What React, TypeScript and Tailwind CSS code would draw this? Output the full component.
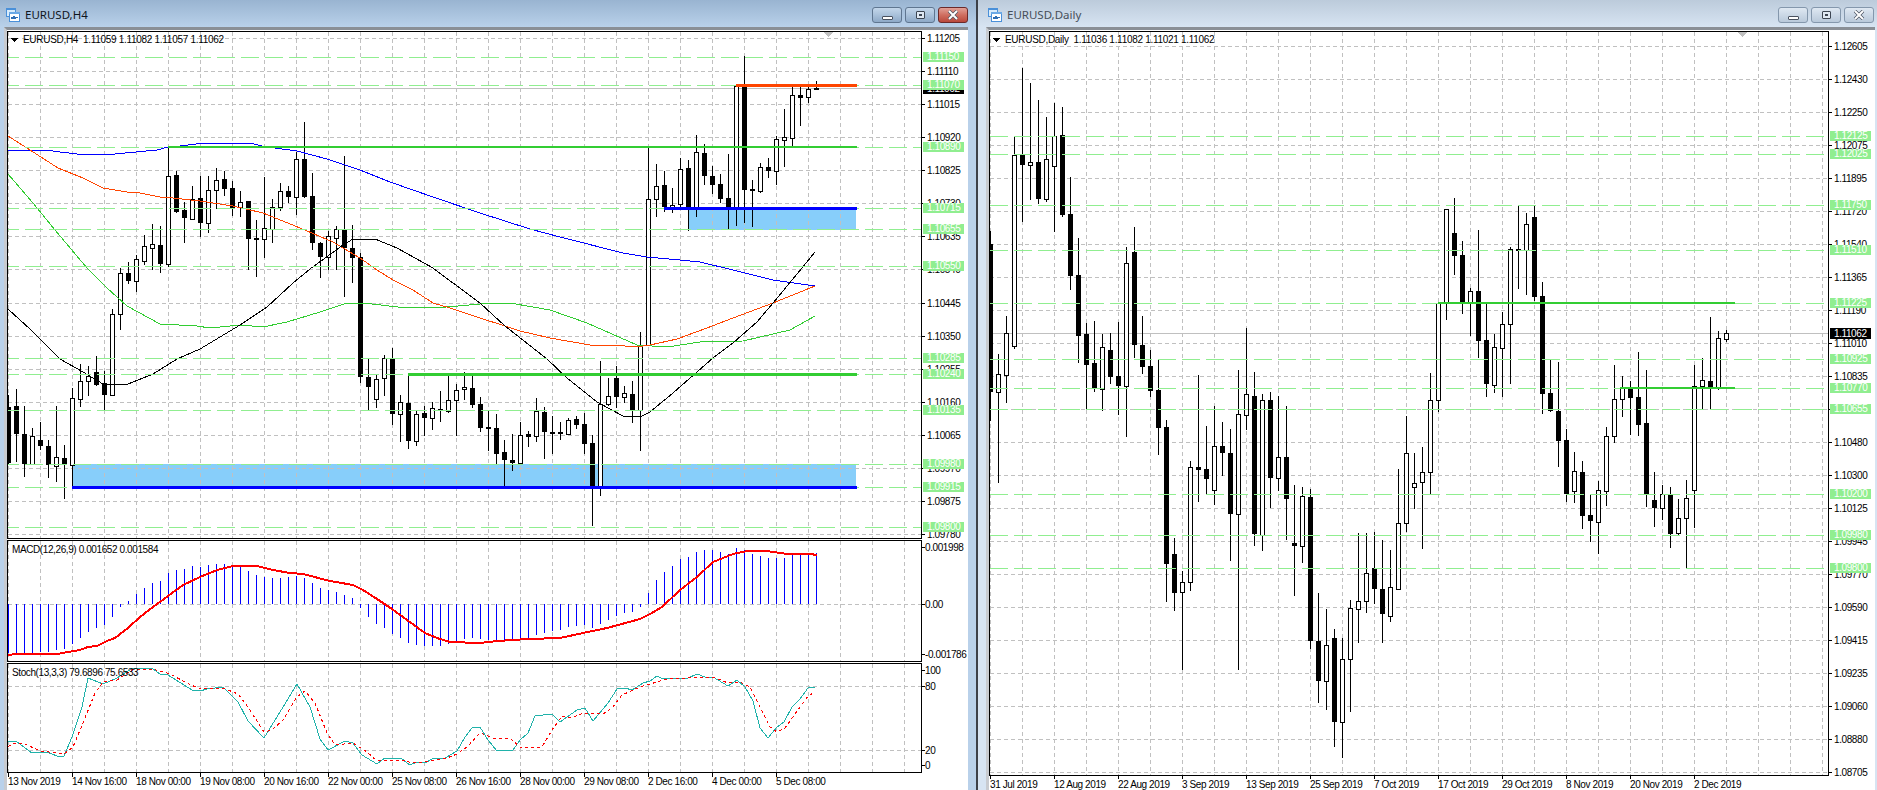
import React from 'react';

type Candle = [number, number, number, number, number];
type Pt = [number, number];

// hi, body top, body bottom, lo, bull
const H4: Candle[] = [
  [395,407,463,465,0],[389,406,434,462,0],[406,434,464,477,0],[428,436,464,464,1],[422,440,446,450,0],[440,446,465,478,0],
  [406,457,466,482,1],[445,458,465,499,0],[388,398,465,487,1],[364,381,399,407,1],[366,376,381,396,1],[356,372,385,386,0],
  [371,383,395,410,0],[309,314,395,396,1],[268,273,314,330,1],[262,273,281,284,0],[255,259,281,292,1],[235,246,261,265,1],
  [224,244,248,270,1],[226,245,264,273,0],[148,176,264,267,1],[171,175,212,213,0],[202,210,218,243,0],[186,199,219,220,1],
  [176,198,223,237,0],[176,190,223,233,1],[168,180,190,209,1],[171,179,189,196,0],[181,188,208,216,0],[191,202,207,217,1],
  [201,201,239,270,0],[220,238,239,277,0],[177,228,239,258,1],[199,207,229,243,1],[183,191,207,211,1],[186,191,197,203,0],
  [152,159,197,215,1],[122,159,197,198,0],[173,196,243,250,0],[242,243,257,278,0],[231,236,257,270,1],[226,229,238,270,1],
  [156,230,248,297,0],[225,248,258,283,0],[253,257,377,383,0],[359,377,387,410,0],[375,379,399,408,1],[355,358,378,396,1],
  [348,358,414,425,0],[395,402,414,442,1],[375,403,441,449,0],[410,414,441,446,1],[406,413,418,436,0],[402,408,418,430,1],
  [391,409,410,422,0],[376,400,411,413,1],[384,390,400,436,1],[372,387,389,400,1],[376,388,405,408,0],[397,404,428,432,0],
  [411,427,429,451,0],[414,428,454,465,0],[440,452,460,487,0],[434,460,463,471,0],[422,435,463,464,1],[431,434,437,447,0],
  [398,411,436,442,1],[407,412,432,459,0],[416,432,433,454,0],[422,432,434,440,0],[418,420,434,435,1],[416,419,425,429,0],
  [413,424,444,454,0],[435,443,487,526,0],[361,404,487,496,1],[378,396,404,406,1],[366,378,397,408,0],[386,393,397,403,1],
  [381,394,410,423,0],[332,346,410,451,1],[148,199,345,346,1],[164,186,199,217,1],[171,185,207,212,0],[188,205,207,213,1],
  [158,169,204,207,1],[160,168,207,231,0],[135,152,208,217,1],[144,153,176,185,0],[166,176,185,194,0],[174,184,199,203,0],
  [154,198,207,229,0],[86,86,208,226,1],[56,86,190,223,0],[180,189,190,227,0],[163,167,191,193,1],[158,167,171,178,0],
  [136,139,171,185,1],[109,137,140,167,1],[86,95,138,146,1],[86,95,98,126,0],[87,89,97,103,1],[81,88,89,90,0],
];

const DAILY: Candle[] = [
  [231,244,392,421,0],[354,374,392,483,1],[316,333,375,403,1],[137,155,346,349,1],[68,155,165,222,0],[83,162,165,200,1],
  [100,162,199,204,0],[117,159,199,202,1],[103,136,166,232,1],[107,135,215,217,0],[177,214,276,290,0],[238,275,336,363,0],
  [323,334,365,409,0],[321,363,388,392,0],[334,347,389,411,1],[333,350,377,384,0],[322,376,386,415,0],[247,263,386,437,1],
  [227,252,345,358,0],[316,345,367,374,0],[350,366,391,397,0],[360,390,428,455,0],[420,427,564,602,0],[538,554,593,611,0],
  [571,582,592,670,1],[461,467,582,591,1],[375,467,470,502,0],[426,469,479,494,0],[406,446,490,505,1],[422,446,453,476,0],
  [429,453,514,561,0],[370,414,514,670,1],[328,394,415,430,1],[372,396,534,546,0],[394,400,535,551,1],[392,400,478,508,0],
  [396,457,478,491,1],[406,457,499,540,0],[485,543,546,596,0],[487,496,546,563,1],[489,497,641,649,0],[593,641,681,703,0],
  [609,645,681,710,1],[629,638,722,747,0],[638,659,722,758,1],[600,608,659,712,1],[533,601,609,643,1],[533,573,601,613,1],
  [532,568,589,604,0],[540,589,614,643,0],[550,587,616,622,1],[469,523,589,590,1],[416,453,523,532,1],[453,483,487,509,1],
  [447,472,482,549,1],[373,400,472,494,1],[303,303,400,412,1],[209,209,303,320,1],[198,233,256,275,0],[241,255,302,314,0],
  [288,291,302,336,1],[230,291,341,358,0],[303,340,384,397,0],[334,347,385,393,1],[312,324,348,397,1],[247,249,324,384,1],
  [206,249,250,289,0],[213,224,250,295,1],[206,217,297,301,0],[282,296,394,414,0],[360,393,411,412,0],[362,411,441,467,0],
  [429,440,494,502,0],[452,471,491,503,1],[461,472,516,529,0],[494,515,521,542,0],[481,490,522,554,1],[427,436,491,506,1],
  [365,399,436,443,1],[376,387,399,417,1],[381,389,398,435,0],[352,397,425,436,0],[370,423,494,507,0],[472,500,508,527,0],
  [485,494,508,520,1],[487,495,534,548,0],[499,518,533,535,1],[480,498,518,568,1],[365,386,490,528,1],[358,380,386,409,1],
  [317,381,387,409,0],[331,338,387,390,1],[330,333,339,342,1],
];

const MACD_HIST = [
  370,370,370,368,365,365,360,358,343,323,305,293,285,260,230,213,192,174,158,153,128,120,117,108,110,105,102,102,107,108,
  122,134,140,144,144,142,137,144,158,174,180,186,195,204,234,260,282,293,312,323,338,345,348,348,348,342,340,327,325,327,
  330,330,330,330,330,325,315,310,303,299,291,288,285,295,282,270,258,248,245,232,188,150,126,108,87,81,66,60,60,66,72,54,
  60,72,78,84,84,84,75,72,72,69,
];

const BLUE_MA: Pt[] = [[8,150],[45,150],[60,152],[77,154],[115,154],[125,153],[157,150],[168,147],[180,146],[204,143],[250,143],[262,146],[275,148],[297,151],[327,159],[360,170],[390,182],[433,197],[480,213],[530,229],[560,237],[623,253],[647,257],[680,260],[700,262],[733,270],[773,280],[815,286]];
const ORANGE_MA: Pt[] = [[8,136],[30,150],[58,168],[83,178],[103,188],[127,192],[140,193],[160,197],[173,198],[200,201],[233,206],[263,213],[300,228],[333,242],[360,258],[377,270],[393,280],[413,290],[433,303],[450,308],[480,318],[505,326],[520,331],[550,338],[590,345],[613,345],[637,347],[650,345],[677,339],[707,328],[733,318],[773,303],[815,286]];
const GREEN_MA: Pt[] = [[8,174],[33,203],[55,230],[87,268],[107,288],[127,306],[160,324],[197,326],[210,328],[240,325],[263,327],[287,322],[320,312],[347,303],[363,303],[407,308],[447,307],[480,304],[510,303],[550,310],[587,323],[637,345],[667,347],[700,342],[743,341],[790,330],[815,316]];
const BLACK_MA: Pt[] = [[8,309],[30,329],[60,359],[83,372],[103,384],[128,384],[153,374],[177,359],[200,349],[240,325],[267,307],[293,283],[310,269],[343,245],[353,239],[375,239],[397,248],[433,268],[453,283],[480,303],[505,326],[547,359],[567,378],[597,402],[623,416],[640,417],[650,412],[673,393],[697,372],[713,358],[733,343],[757,322],[773,303],[802,268],[815,252]];

const MACD_LINE: Pt[] = [[8,655],[17,654],[57,654],[68,652],[80,650],[88,647],[97,646],[107,641],[115,638],[128,628],[140,617],[153,607],[168,596],[183,585],[200,577],[217,570],[233,566],[257,566],[273,570],[290,573],[303,574],[330,581],[353,585],[363,590],[377,599],[392,609],[407,620],[425,633],[437,638],[450,642],[480,643],[497,641],[528,639],[560,638],[583,633],[607,628],[640,619],[650,614],[662,607],[680,590],[697,577],[713,562],[733,554],[747,551],[767,551],[787,554],[810,554],[817,555]];

const STOCH_MAIN: Pt[] = [[8,741],[17,742],[32,753],[47,752],[57,756],[64,756],[72,737],[82,707],[88,678],[103,684],[117,678],[133,668],[153,669],[160,674],[168,675],[192,690],[200,691],[207,689],[223,687],[238,702],[248,721],[264,738],[280,712],[297,684],[310,707],[320,739],[328,750],[345,741],[353,743],[362,755],[377,764],[385,758],[402,759],[410,765],[417,762],[425,763],[432,759],[445,758],[457,751],[465,737],[472,728],[480,727],[488,740],[497,751],[513,750],[520,740],[528,733],[535,716],[552,714],[560,722],[577,710],[585,708],[593,721],[608,703],[617,689],[625,688],[632,690],[643,683],[650,681],[657,676],[663,679],[688,678],[697,674],[705,677],[713,677],[728,686],[737,680],[745,687],[753,701],[760,728],[768,738],[777,727],[784,722],[792,707],[800,699],[808,688],[815,687]];
const STOCH_SIGNAL: Pt[] = [[8,747],[13,743],[23,743],[40,751],[57,753],[64,754],[73,747],[83,723],[95,693],[103,682],[117,680],[127,673],[133,669],[153,669],[170,674],[187,683],[200,689],[223,688],[238,694],[248,707],[264,732],[272,730],[283,720],[297,697],[305,691],[315,703],[327,733],[335,745],[353,743],[367,752],[377,761],[402,760],[413,763],[425,762],[447,758],[457,754],[467,747],[480,733],[493,738],[510,738],[520,747],[530,747],[542,747],[552,730],[562,716],[572,718],[583,713],[603,714],[613,707],[622,695],[640,687],[657,682],[667,679],[688,678],[697,677],[713,677],[728,683],[740,682],[750,687],[760,707],[770,727],[777,732],[785,728],[800,707],[808,696],[815,692]];

const toPoints = (pts: Pt[]) => pts.map(([x, y]) => `${x},${y}`).join(' ');

function Candles({ data, x0 }: { data: Candle[]; x0: number }) {
  return (
    <g>
      {data.map(([hi, top, bot, lo, bull], i) => {
        const x = x0 + 8 * i;
        return (
          <g key={i}>
            <rect x={x} y={hi} width={1} height={lo - hi} fill="#000" />
            {bull ? (
              <rect x={x - 1.5} y={top + 0.5} width={4} height={Math.max(bot - top, 1)} fill="#fff" stroke="#000" />
            ) : (
              <rect x={x - 2} y={top} width={5} height={Math.max(bot - top, 2)} fill="#000" />
            )}
          </g>
        );
      })}
    </g>
  );
}

function HGrid({ rows, x1, x2 }: { rows: number[]; x1: number; x2: number }) {
  return (
    <g stroke="#c0c0c0" strokeDasharray="4 3">
      {rows.map((y) => (
        <line key={y} x1={x1} x2={x2} y1={y + 0.5} y2={y + 0.5} />
      ))}
    </g>
  );
}

function VGrid({ x0, x2, y1, y2 }: { x0: number; x2: number; y1: number; y2: number }) {
  const cols: number[] = [];
  for (let x = x0; x <= x2; x += 32) cols.push(x);
  return (
    <g stroke="#c0c0c0" strokeDasharray="4 3">
      {cols.map((x) => (
        <line key={x} x1={x + 0.5} x2={x + 0.5} y1={y1} y2={y2} />
      ))}
    </g>
  );
}

function Levels({ levels, x1, x2 }: { levels: [string, number][]; x1: number; x2: number }) {
  return (
    <g stroke="#90ee90" strokeDasharray="18 6">
      {levels.map(([p, y]) => (
        <line key={p} x1={x1} x2={x2} y1={y + 0.5} y2={y + 0.5} />
      ))}
    </g>
  );
}

function AxisLabels({ labels, x, tick }: { labels: [string, number][]; x: number; tick: number }) {
  return (
    <g>
      {labels.map(([p, y]) => (
        <g key={p}>
          <rect x={tick} y={y} width={3} height={1} fill="#000" />
          <text x={x} y={y + 4} fill="#000">{p}</text>
        </g>
      ))}
    </g>
  );
}

function LevelTags({ levels, x, tx }: { levels: [string, number][]; x: number; tx: number }) {
  return (
    <g>
      {levels.map(([p, y]) => (
        <g key={p}>
          <rect x={x} y={y - 5} width={41} height={10} fill="#90ee90" />
          <text x={tx} y={y + 3} fill="#fff">{p}</text>
        </g>
      ))}
    </g>
  );
}

const H4_TICKS = ['1.11205','1.11110','1.11015','1.10920','1.10825','1.10730','1.10635','1.10540','1.10445','1.10350','1.10255','1.10160','1.10065','1.09970','1.09875','1.09780']
  .map((p, k): [string, number] => [p, Math.round(38 + 33.07 * k)]);
const H4_LEVELS: [string, number][] = [['1.11150',57],['1.11070',85],['1.10890',147],['1.10715',208],['1.10655',229],['1.10550',266],['1.10285',358],['1.10240',374],['1.10135',410],['1.09980',464],['1.09915',487],['1.09800',527]];
const H4_TIMES: [string, number][] = [['13 Nov 2019',8],['14 Nov 16:00',72],['18 Nov 00:00',136],['19 Nov 08:00',200],['20 Nov 16:00',264],['22 Nov 00:00',328],['25 Nov 08:00',392],['26 Nov 16:00',456],['28 Nov 00:00',520],['29 Nov 08:00',584],['2 Dec 16:00',648],['4 Dec 00:00',712],['5 Dec 08:00',776]];

const D_TICKS = ['1.12605','1.12430','1.12250','1.12075','1.11895','1.11720','1.11540','1.11365','1.11190','1.11010','1.10835','1.10655','1.10480','1.10300','1.10125','1.09945','1.09770','1.09590','1.09415','1.09235','1.09060','1.08880','1.08705']
  .map((p, k): [string, number] => [p, 46 + 33 * k]);
const D_LEVELS: [string, number][] = [['1.12125',136],['1.12025',154],['1.11750',205],['1.11510',250],['1.11225',303],['1.10925',359],['1.10770',388],['1.10655',409],['1.10200',494],['1.09980',535],['1.09800',568]];
const D_TIMES: [string, number][] = [['31 Jul 2019',990],['12 Aug 2019',1054],['22 Aug 2019',1118],['3 Sep 2019',1182],['13 Sep 2019',1246],['25 Sep 2019',1310],['7 Oct 2019',1374],['17 Oct 2019',1438],['29 Oct 2019',1502],['8 Nov 2019',1566],['20 Nov 2019',1630],['2 Dec 2019',1694]];

function H4Chart() {
  const rows = H4_TICKS.map((t) => t[1]);
  return (
    <svg className="block h-[760px] w-[961px] bg-white text-[10px] tracking-[-0.4px]" viewBox="7 30 961 760" shapeRendering="crispEdges">
      {/* main pane */}
      <rect x={688} y={209} width={168} height={21} fill="#87cefa" />
      <rect x={72} y={464} width={784} height={23} fill="#87cefa" />
      <HGrid rows={rows} x1={8} x2={921} />
      <VGrid x0={8} x2={904} y1={32} y2={538} />
      <rect x={8} y={88} width={914} height={1} fill="#c0c0c0" />
      <Candles data={H4} x0={8} />
      <g fill="none" strokeWidth={1}>
        <polyline points={toPoints(GREEN_MA)} stroke="#32cd32" />
        <polyline points={toPoints(BLUE_MA)} stroke="#0000ff" />
        <polyline points={toPoints(ORANGE_MA)} stroke="#ff4500" />
        <polyline points={toPoints(BLACK_MA)} stroke="#000" />
      </g>
      <Levels levels={H4_LEVELS} x1={1} x2={921} />
      <rect x={736} y={84} width={121} height={3} fill="#ff4500" />
      <rect x={168} y={146} width={689} height={2} fill="#32cd32" />
      <rect x={664} y={207} width={193} height={3} fill="#0000ff" />
      <rect x={408} y={373} width={449} height={3} fill="#32cd32" />
      <rect x={72} y={486} width={785} height={3} fill="#0000ff" />
      <path d="M824 32h9l-4.5 5z" fill="#c0c0c0" />
      <path d="M11 38h7l-3.5 4z" fill="#000" />
      <text x={23} y={43} fill="#000" className="tracking-[-0.3px]">{'EURUSD,H4\u00a0 1.11059 1.11082 1.11057 1.11062'}</text>

      {/* MACD pane */}
      <HGrid rows={[604]} x1={8} x2={921} />
      <VGrid x0={8} x2={904} y1={541} y2={661} />
      <g fill="#0000ff">
        {MACD_HIST.map((z, i) => {
          const y = Math.round(530 + z / 3);
          return <rect key={i} x={8 + 8 * i} y={Math.min(y, 604)} width={1} height={Math.abs(y - 604)} />;
        })}
      </g>
      <polyline points={toPoints(MACD_LINE)} fill="none" stroke="#ff0000" strokeWidth={2} />
      <text x={12} y={553} fill="#000">MACD(12,26,9) 0.001652 0.001584</text>

      {/* stochastic pane */}
      <HGrid rows={[686, 750]} x1={8} x2={921} />
      <VGrid x0={8} x2={904} y1={664} y2={772} />
      <polyline points={toPoints(STOCH_MAIN)} fill="none" stroke="#20b2aa" />
      <polyline points={toPoints(STOCH_SIGNAL)} fill="none" stroke="#ff0000" strokeDasharray="3 3" />
      <text x={12} y={676} fill="#000">Stoch(13,3,3) 79.6896 75.6533</text>

      {/* frames */}
      <g fill="none" stroke="#000">
        <rect x={7.5} y={31.5} width={914} height={507} />
        <rect x={7.5} y={540.5} width={914} height={121} />
        <rect x={7.5} y={663.5} width={914} height={109} />
      </g>

      {/* price axis */}
      <AxisLabels labels={H4_TICKS} x={927} tick={922} />
      <rect x={923} y={83} width={41} height={11} fill="#000" />
      <text x={927} y={92} fill="#fff">1.11062</text>
      <LevelTags levels={H4_LEVELS} x={923} tx={927} />
      <AxisLabels labels={[['0.001998', 547], ['0.00', 604], ['-0.001786', 654]]} x={925} tick={922} />
      <AxisLabels labels={[['100', 670], ['80', 686], ['20', 750], ['0', 765]]} x={925} tick={922} />

      {/* time axis */}
      {H4_TIMES.map(([t, x]) => (
        <g key={t}>
          <rect x={x} y={773} width={1} height={4} fill="#000" />
          <text x={x} y={785} fill="#000">{t}</text>
        </g>
      ))}
    </svg>
  );
}

function DailyChart() {
  const rows = D_TICKS.map((t) => t[1]);
  return (
    <svg className="block h-[760px] w-[886px] bg-white text-[10px] tracking-[-0.4px]" viewBox="989 30 886 760" shapeRendering="crispEdges">
      <HGrid rows={rows} x1={990} x2={1828} />
      <VGrid x0={990} x2={1822} y1={32} y2={775} />
      <rect x={990} y={333} width={838} height={1} fill="#c0c0c0" />
      <Candles data={DAILY} x0={990} />
      <Levels levels={D_LEVELS} x1={990} x2={1828} />
      <rect x={1438} y={302} width={297} height={2} fill="#32cd32" />
      <rect x={1620} y={387} width={115} height={2} fill="#32cd32" />
      <path d="M1737 32h10l-5 5z" fill="#c0c0c0" />
      <path d="M993 38h7l-3.5 4z" fill="#000" />
      <text x={1005} y={43} fill="#000" className="tracking-[-0.3px]">{'EURUSD,Daily\u00a0 1.11036 1.11082 1.11021 1.11062'}</text>
      <rect x={989.5} y={31.5} width={839} height={744} fill="none" stroke="#000" />

      <AxisLabels labels={D_TICKS} x={1834} tick={1829} />
      <rect x={1830} y={328} width={41} height={11} fill="#000" />
      <text x={1834} y={337} fill="#fff">1.11062</text>
      <LevelTags levels={D_LEVELS} x={1830} tx={1834} />

      {D_TIMES.map(([t, x]) => (
        <g key={t}>
          <rect x={x} y={776} width={1} height={3} fill="#000" />
          <text x={x} y={788} fill="#000">{t}</text>
        </g>
      ))}
    </svg>
  );
}

function WindowIcon() {
  return (
    <svg width="14" height="14" viewBox="0 0 14 14" className="shrink-0" shapeRendering="crispEdges">
      <rect x="0.5" y="0.5" width="9" height="8" fill="#d9ecfb" stroke="#4a90d9" />
      <rect x="0" y="0" width="10" height="2" fill="#4a90d9" />
      <rect x="3.5" y="4.5" width="10" height="9" fill="#fff" stroke="#4a90d9" />
      <rect x="3" y="4" width="11" height="2" fill="#6aa9e6" />
      <polyline points="5,11 6,9 7,11 8,8 9,11 10,9 12,10" fill="none" stroke="#2f6fb5" />
    </svg>
  );
}

function TitleButtons({ active }: { active: boolean }) {
  const base = 'flex h-[16px] w-[30px] items-center justify-center rounded-[3px] border';
  const plain = active
    ? 'border-[#5f7690] bg-linear-to-b from-[#c3d6ea] via-[#a9c1da] to-[#8ea9c7]'
    : 'border-[#8497ac] bg-linear-to-b from-[#dfe8f2] via-[#cbd8e6] to-[#b9c9da]';
  const close = active
    ? 'border-[#6b2a2a] bg-linear-to-b from-[#e0a097] via-[#cf6e60] to-[#b9483c]'
    : plain;
  return (
    <div className="ml-auto flex gap-[3px]">
      <div className={`${base} ${plain}`}>
        <div className="mt-[5px] h-[4px] w-[11px] rounded-[1px] border border-[#4a5260] bg-white" />
      </div>
      <div className={`${base} ${plain}`}>
        <div className="flex h-[8px] w-[9px] items-center justify-center rounded-[1px] border border-[#3d4652] bg-[#dfe8f2]">
          <div className="h-[2px] w-[3px] bg-[#3d4652]" />
        </div>
      </div>
      <div className={`${base} ${close}`}>
        <svg width="12" height="10" viewBox="0 0 12 10">
          <path d="M2 1l8 8M10 1l-8 8" stroke="#4a5260" strokeWidth="3.4" />
          <path d="M2 1l8 8M10 1l-8 8" stroke="#fff" strokeWidth="2" />
        </svg>
      </div>
    </div>
  );
}

function App() {
  return (
    <div className="flex h-[790px] w-[1877px] overflow-hidden font-['Liberation_Sans',sans-serif]">
      {/* H4 window, focused */}
      <div className="flex w-[978px] flex-col border-r-2 border-[#3c4048] bg-[#b9d1ea]">
        <div className="flex h-[27px] items-center gap-[5px] bg-linear-to-b from-[#99b4d1] to-[#b9d1ea] pl-[6px] pr-[8px] pt-[3px]">
          <WindowIcon />
          <span className="font-['Noto_Sans',sans-serif] text-[11.5px] text-[#10151c]">EURUSD,H4</span>
          <TitleButtons active />
        </div>
        <div className="ml-[4px] mr-[8px] flex-1 border-l-[3px] border-t-[3px] border-l-[#c8cbd0] border-t-[#8a8f96]">
          <H4Chart />
        </div>
      </div>

      {/* Daily window */}
      <div className="flex w-[899px] flex-col bg-[#d7e4f2]">
        <div className="flex h-[27px] items-center gap-[5px] bg-linear-to-b from-[#bccbdb] to-[#d7e4f2] pl-[10px] pr-[3px] pt-[3px]">
          <WindowIcon />
          <span className="font-['Noto_Sans',sans-serif] text-[11.5px] text-[#474f5a]">EURUSD,Daily</span>
          <TitleButtons active={false} />
        </div>
        <div className="ml-[8px] mr-[2px] flex-1 border-l-[3px] border-t-[3px] border-l-[#c8cbd0] border-t-[#8a8f96]">
          <DailyChart />
        </div>
      </div>
    </div>
  );
}

export default App;
